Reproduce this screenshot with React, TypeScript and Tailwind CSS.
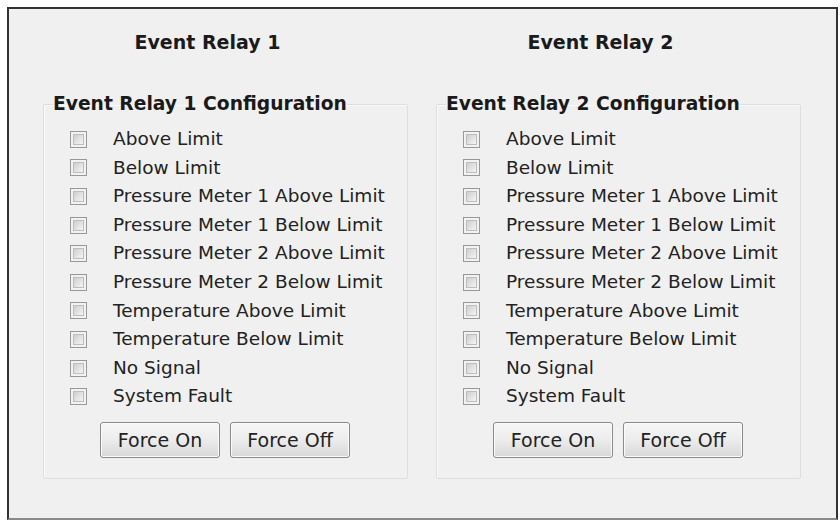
import React from "react";

const items = [
  "Above Limit",
  "Below Limit",
  "Pressure Meter 1 Above Limit",
  "Pressure Meter 1 Below Limit",
  "Pressure Meter 2 Above Limit",
  "Pressure Meter 2 Below Limit",
  "Temperature Above Limit",
  "Temperature Below Limit",
  "No Signal",
  "System Fault",
];

function CheckBox() {
  return (
    <span className="block w-[17px] h-[17px] border border-[#989898] bg-[#f2f2f2] p-[2px]">
      <span className="block w-full h-full border border-[#bdbdbd] bg-gradient-to-br from-[#cfcfcf] to-[#f4f4f4]" />
    </span>
  );
}

function Btn({ label }: { label: string }) {
  return (
    <button className="w-[120px] h-[36px] rounded-[3px] border border-[#8a8a8a] bg-gradient-to-b from-[#f6f6f6] via-[#ececec] to-[#d8d8d8] text-[19px] text-[#222] shadow-[inset_0_0_0_1px_#fbfbfb]">
      {label}
    </button>
  );
}

function Column({ n }: { n: number }) {
  return (
    <div className="w-[365px] flex flex-col">
      <div className="h-[84px] pt-[21px] pr-[36px] text-center text-[19px] font-bold leading-[24px] text-[#1a1a1a]">
        Event Relay {n}
      </div>
      <fieldset className="border border-[#dedede] shadow-[inset_1px_1px_0_#fafafa] pb-[20px] rounded-[2px]">
        <legend className="ml-[9px] text-[18.7px] font-bold leading-[22px] text-[#1a1a1a]">
          Event Relay {n} Configuration
        </legend>
        <div className="pt-[10px] pl-[26px] flex flex-col">
          {items.map((it) => (
            <div key={it} className="h-[28.6px] flex items-center gap-[26px]">
              <CheckBox />
              <span className="text-[18.5px] text-[#222] leading-none">{it}</span>
            </div>
          ))}
        </div>
        <div className="mt-[11px] ml-[56px] flex gap-[10px]">
          <Btn label="Force On" />
          <Btn label="Force Off" />
        </div>
      </fieldset>
    </div>
  );
}

export default function App() {
  return (
    <div
      className="w-[840px] h-[521px] bg-white pt-[7px] pl-[7px]"
      style={{ fontFamily: '"DejaVu Sans", sans-serif' }}
    >
      <div className="w-[831px] h-[513px] border-2 border-[#333333] border-b-[#8a8a8a] bg-[#f0f0f0] pl-[34px] flex gap-[28px]">
        <Column n={1} />
        <Column n={2} />
      </div>
    </div>
  );
}
